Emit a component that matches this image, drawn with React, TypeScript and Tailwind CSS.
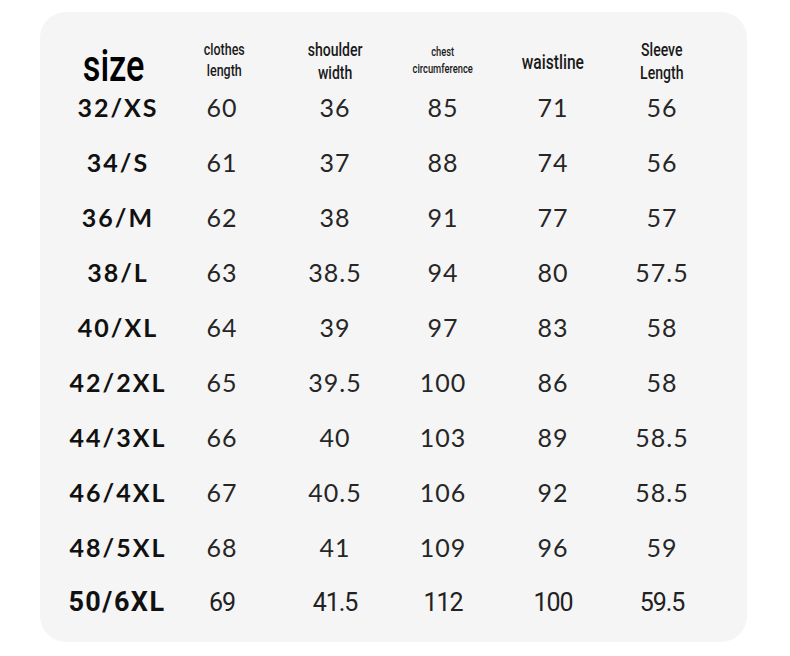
const rows: [string, string, string, string, string, string][] = [
  ["32/XS", "60", "36", "85", "71", "56"],
  ["34/S", "61", "37", "88", "74", "56"],
  ["36/M", "62", "38", "91", "77", "57"],
  ["38/L", "63", "38.5", "94", "80", "57.5"],
  ["40/XL", "64", "39", "97", "83", "58"],
  ["42/2XL", "65", "39.5", "100", "86", "58"],
  ["44/3XL", "66", "40", "103", "89", "58.5"],
  ["46/4XL", "67", "40.5", "106", "92", "58.5"],
  ["48/5XL", "68", "41", "109", "96", "59"],
];

const last: [string, string, string, string, string, string] = ["50/6XL", "69", "41.5", "112", "100", "59.5"];

const cols = "grid grid-cols-[108px_100px_126px_90px_130px_88px]";

function Head({ className, children }: { className: string; children: React.ReactNode }) {
  // condensed look: Roboto squeezed horizontally
  return (
    <div className="flex justify-center">
      <div className={`scale-x-[0.78] text-center font-['Roboto',sans-serif] font-medium text-[#1a1a1a] ${className}`}>
        {children}
      </div>
    </div>
  );
}

export default function App() {
  return (
    <div className="min-h-[656px] w-[790px] bg-white pt-[12px] pl-[40px]">
      <div className="w-[707px] rounded-[26px] bg-[#f5f5f5] pl-[24px] pt-[20px] pb-[12px] text-[#1a1a1a]">
        <div className={`${cols} h-[48px] items-center`}>
          <Head className="mr-[8px] pt-[12px] text-[44px] font-bold leading-none text-black">size</Head>
          <Head className="ml-[4px] text-[16px] leading-[21px]">clothes<br />length</Head>
          <Head className="pt-[2px] text-[18px] leading-[23px]">shoulder<br />width</Head>
          <Head className="pt-[2px] text-[12px] leading-[17px]">chest<br />circumference</Head>
          <Head className="pt-[4px] text-[20px] leading-[24px]">waistline</Head>
          <Head className="pt-[2px] text-[18px] leading-[23px]">Sleeve<br />Length</Head>
        </div>
        {rows.map((r) => (
          <div key={r[0]} className={`${cols} h-[55px] items-center text-center font-['Lato',sans-serif]`}>
            <div className="text-[25px] font-bold tracking-[2px] text-[#111]">{r[0]}</div>
            {r.slice(1).map((v, i) => (
              <div key={i} className="text-[25px] font-normal tracking-[1px] text-[#262626]">{v}</div>
            ))}
          </div>
        ))}
        <div className={`${cols} h-[55px] items-center text-center font-['Roboto',sans-serif]`}>
          <div className="mr-[2px] text-[27px] font-bold tracking-[1.5px] text-[#111]">{last[0]}</div>
          {last.slice(1).map((v, i) => (
            <div key={i} className="text-[25px] font-normal tracking-[-1px] text-[#222]">{v}</div>
          ))}
        </div>
      </div>
    </div>
  );
}
